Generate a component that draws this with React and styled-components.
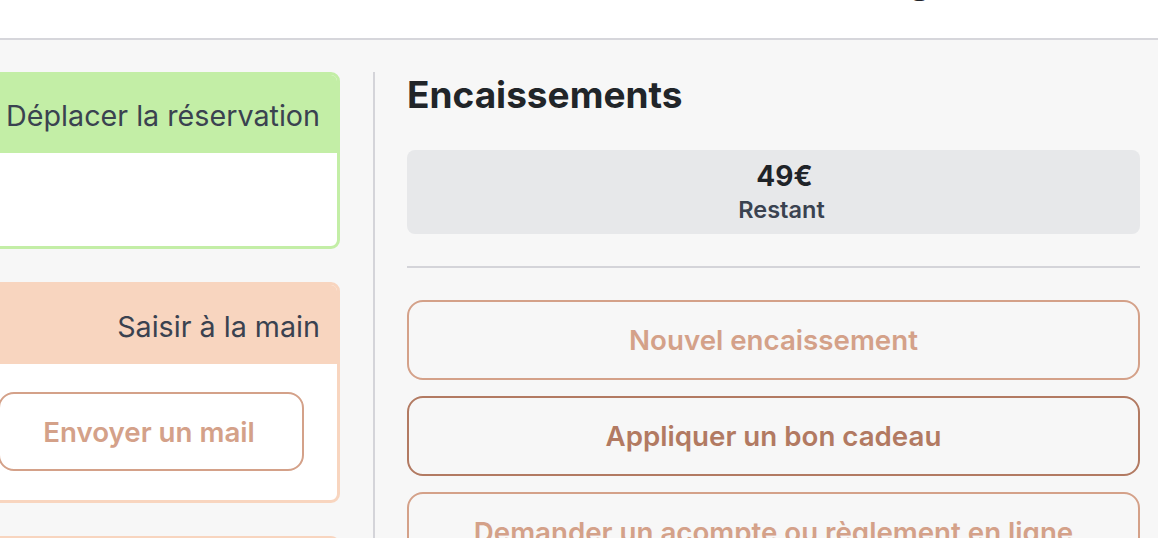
import React from "react";
import styled, { createGlobalStyle } from "styled-components";

const GlobalStyle = createGlobalStyle`
  html, body { margin: 0; padding: 0; }
  body {
    font-family: Inter, "Noto Sans", Roboto, sans-serif;
    background: #f7f7f7;
    overflow: hidden;
  }
  * { box-sizing: border-box; }
`;

const palette = {
  green: "#c3eea6",
  peach: "#f8d5bf",
  accent: "#d4a189",
  accentStrong: "#b27a62",
};

const TopBar = styled.header`
  height: 40px;
  background: #ffffff;
  border-bottom: 2px solid #d6d6db;
  overflow: hidden;
  display: flex;
  align-items: flex-start;
  padding-left: 908px;
`;

const TopTitle = styled.span`
  font-size: 37px;
  line-height: 48px;
  font-weight: 700;
  color: #1f2328;
  margin-top: -44.5px;
`;

const Main = styled.main`
  display: flex;
  align-items: flex-start;
  padding: 32px 18px 0 0;
  height: 498px;
  overflow: hidden;
`;

const SideColumn = styled.div`
  margin-left: -37px;
  width: 377px;
  flex-shrink: 0;
  display: flex;
  flex-direction: column;
  gap: 33px;
`;

const Card = styled.section`
  border: 3px solid ${(p) => p.$tone};
  border-radius: 9px;
  background: #ffffff;
  overflow: hidden;
`;

const CardHead = styled.div`
  background: ${(p) => p.$tone};
  height: ${(p) => p.$h}px;
  display: flex;
  align-items: center;
  justify-content: flex-end;
  padding: 4px 17px 0 0;
  font-size: 28.7px;
  line-height: 40px;
  color: #3a4250;
`;

const CardBody = styled.div`
  min-height: ${(p) => p.$h}px;
  padding: 28px 33px 29px 32px;
`;

const Divider = styled.div`
  width: 2px;
  align-self: stretch;
  background: #d4d4d9;
  margin: 0 32px 0 33px;
  flex-shrink: 0;
`;

const Content = styled.div`
  flex: 1;
  display: flex;
  flex-direction: column;
`;

const Title = styled.h2`
  margin: 0;
  font-size: 37px;
  line-height: 46px;
  font-weight: 700;
  color: #212529;
`;

const Balance = styled.div`
  margin-top: 32px;
  background: #e7e8ea;
  border-radius: 8px;
  padding: 8px 0 8px 16px;
  text-align: center;
`;

const Amount = styled.div`
  font-size: 28px;
  line-height: 36px;
  font-weight: 700;
  color: #1f2328;
  padding-left: 6px;
`;

const AmountLabel = styled.div`
  font-size: 23.5px;
  line-height: 32px;
  font-weight: 600;
  color: #3a4250;
`;

const Rule = styled.hr`
  margin: 32px 0;
  border: 0;
  height: 2px;
  background: #d4d4d9;
`;

const Actions = styled.div`
  display: flex;
  flex-direction: column;
  gap: 16px;
`;

const ActionButton = styled.button`
  width: 100%;
  height: 80px;
  flex-shrink: 0;
  border: 2px solid ${(p) => (p.$strong ? palette.accentStrong : palette.accent)};
  color: ${(p) => (p.$strong ? palette.accentStrong : palette.accent)};
  background: transparent;
  border-radius: 16px;
  font-family: inherit;
  font-size: 27.7px;
  font-weight: 600;
  cursor: pointer;
`;

const MailButton = styled(ActionButton)`
  height: 79px;
  background: #ffffff;
  padding-right: 10px;
`;

export default function App() {
  return (
    <>
      <GlobalStyle />
      <TopBar>
        <TopTitle>g</TopTitle>
      </TopBar>
      <Main>
        <SideColumn>
          <Card $tone={palette.green}>
            <CardHead $tone={palette.green} $h={78}>Déplacer la réservation</CardHead>
            <CardBody $h={93} />
          </Card>
          <Card $tone={palette.peach}>
            <CardHead $tone={palette.peach} $h={79}>Saisir à la main</CardHead>
            <CardBody $h={136}>
              <MailButton>Envoyer un mail</MailButton>
            </CardBody>
          </Card>
          <Card $tone={palette.peach}>
            <CardHead $tone={palette.peach} $h={79}>Saisir à la main</CardHead>
          </Card>
        </SideColumn>
        <Divider />
        <Content>
          <Title>Encaissements</Title>
          <Balance>
            <Amount>49€</Amount>
            <AmountLabel>Restant</AmountLabel>
          </Balance>
          <Rule />
          <Actions>
            <ActionButton>Nouvel encaissement</ActionButton>
            <ActionButton $strong>Appliquer un bon cadeau</ActionButton>
            <ActionButton>Demander un acompte ou règlement en ligne</ActionButton>
          </Actions>
        </Content>
      </Main>
    </>
  );
}
